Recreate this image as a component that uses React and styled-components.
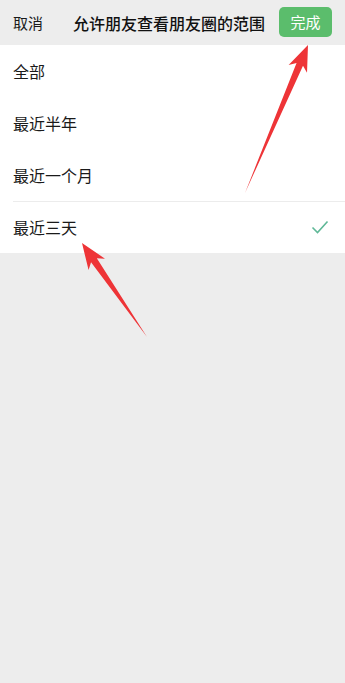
import React from "react";
import styled, { createGlobalStyle } from "styled-components";

const Global = createGlobalStyle`
  html, body {
    margin: 0;
    padding: 0;
    background: #ededed;
  }
  body {
    font-family: "Noto Sans CJK SC", "Noto Sans", sans-serif;
  }
`;

const Page = styled.div`
  position: relative;
  width: 345px;
  height: 683px;
  background: #ededed;
  overflow: hidden;
`;

const Header = styled.header`
  height: 45px;
  display: flex;
  align-items: center;
  padding: 0 13px 0 13px;
  box-sizing: border-box;
`;

const Cancel = styled.span`
  font-size: 15px;
  color: #1a1a1a;
  width: 60px;
`;

const Title = styled.h1`
  flex: 1;
  margin: 0;
  font-size: 16px;
  font-weight: 500;
  color: #111;
  white-space: nowrap;
`;

const DoneButton = styled.button`
  width: 53px;
  height: 30px;
  border: none;
  border-radius: 5px;
  background: #5bbd6c;
  color: #fff;
  font-family: inherit;
  font-size: 15px;
  padding: 0;
  margin-top: -2px;
`;

const List = styled.ul`
  list-style: none;
  margin: 0;
  padding: 0;
  background: #fff;
`;

const Row = styled.li`
  height: 52px;
  display: flex;
  align-items: center;
  justify-content: space-between;
  padding: 0 16px 0 13px;
  position: relative;
  font-size: 16px;
  color: #1a1a1a;
  &::before {
    content: "";
    position: absolute;
    top: 0;
    left: 13px;
    right: 0;
    height: 1px;
    background: ${(p) => (p.$divider ? "#ececec" : "transparent")};
  }
`;

const Check = () => (
  <svg width="18" height="14" viewBox="0 0 18 14">
    <path d="M1.5 7.5 L6.5 12.5 L16.5 1.5" fill="none" stroke="#5fb897" strokeWidth="1.6" />
  </svg>
);

const Overlay = styled.svg`
  position: absolute;
  inset: 0;
  pointer-events: none;
`;

function Arrow({ x1, y1, x2, y2 }) {
  const dx = x2 - x1;
  const dy = y2 - y1;
  const L = Math.hypot(dx, dy);
  const a = (Math.atan2(dy, dx) * 180) / Math.PI;
  const pts = [
    [0, 0],
    [L - 21, -3.5],
    [L - 26, -10],
    [L, 0],
    [L - 26, 10],
    [L - 21, 3.5],
  ]
    .map((p) => p.join(","))
    .join(" ");
  return (
    <polygon
      points={pts}
      fill="#ee3437"
      transform={`translate(${x1} ${y1}) rotate(${a})`}
    />
  );
}

const options = [
  { label: "全部" },
  { label: "最近半年" },
  { label: "最近一个月" },
  { label: "最近三天", checked: true, divider: true },
];

export default function App() {
  return (
    <Page>
      <Global />
      <Header>
        <Cancel>取消</Cancel>
        <Title>允许朋友查看朋友圈的范围</Title>
        <DoneButton>完成</DoneButton>
      </Header>
      <List>
        {options.map((o) => (
          <Row key={o.label} $divider={o.divider}>
            <span>{o.label}</span>
            {o.checked && <Check />}
          </Row>
        ))}
      </List>
      <Overlay width="345" height="683" viewBox="0 0 345 683">
        <Arrow x1={245} y1={193} x2={308} y2={45} />
        <Arrow x1={147} y1={337} x2={82} y2={243} />
      </Overlay>
    </Page>
  );
}
